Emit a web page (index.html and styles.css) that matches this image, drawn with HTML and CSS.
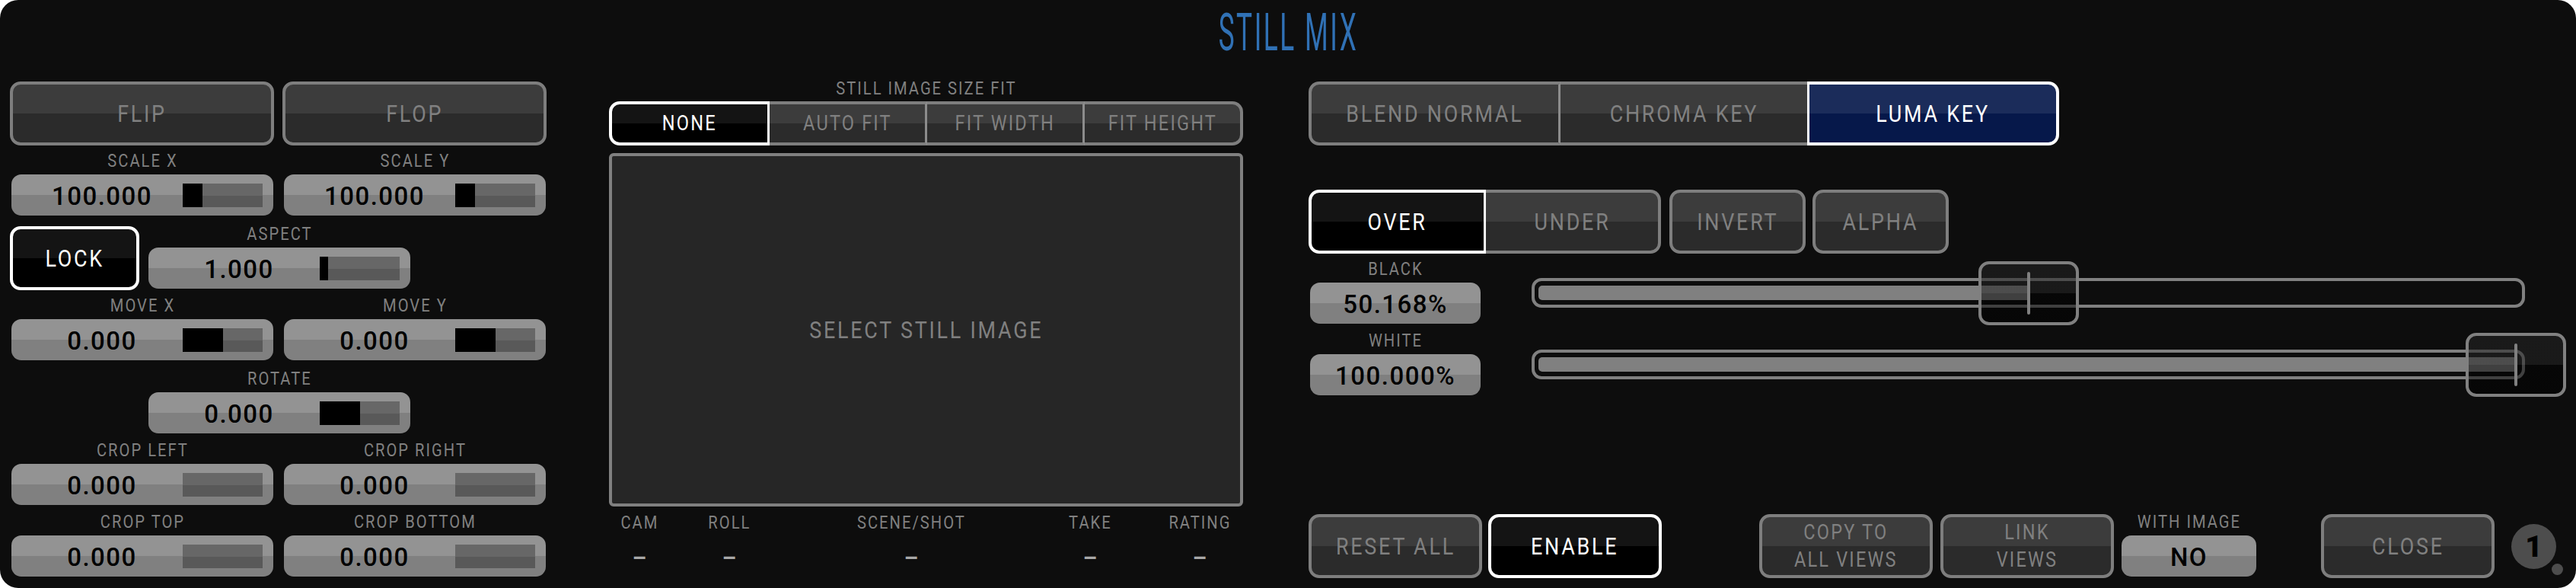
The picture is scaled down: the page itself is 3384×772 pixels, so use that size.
FILE: index.html
```html
<!DOCTYPE html>
<html lang="en">
<head>
    <meta charset="UTF-8">
    <title>Still Mix</title>
    <link rel="stylesheet" href="styles.css">
</head>
<body>
    <div class="panel">
        <header class="title"><h1>STILL MIX</h1></header>
        <div class="columns">
            <section class="transform">
                <div class="row buttons">
                    <button class="btn wide"><span>FLIP</span></button>
                    <button class="btn wide"><span>FLOP</span></button>
                </div>
                <div class="row short">
                    <div class="control"><label>SCALE X</label><div class="field"><b>100.000</b><i class="meter"><i style="width:25%"></i></i></div></div>
                    <div class="control"><label>SCALE Y</label><div class="field"><b>100.000</b><i class="meter"><i style="width:25%"></i></i></div></div>
                </div>
                <div class="row tall">
                    <button class="btn lock active"><span>LOCK</span></button>
                    <div class="control aspect"><label>ASPECT</label><div class="field"><b>1.000</b><i class="meter"><i style="width:10%"></i></i></div></div>
                </div>
                <div class="row">
                    <div class="control"><label>MOVE X</label><div class="field"><b>0.000</b><i class="meter"><i style="width:50%"></i></i></div></div>
                    <div class="control"><label>MOVE Y</label><div class="field"><b>0.000</b><i class="meter"><i style="width:50%"></i></i></div></div>
                </div>
                <div class="row tall">
                    <div class="control rotate"><label>ROTATE</label><div class="field"><b>0.000</b><i class="meter"><i style="width:50%"></i></i></div></div>
                </div>
                <div class="row">
                    <div class="control"><label>CROP LEFT</label><div class="field"><b>0.000</b><i class="meter"></i></div></div>
                    <div class="control"><label>CROP RIGHT</label><div class="field"><b>0.000</b><i class="meter"></i></div></div>
                </div>
                <div class="row">
                    <div class="control"><label>CROP TOP</label><div class="field"><b>0.000</b><i class="meter"></i></div></div>
                    <div class="control"><label>CROP BOTTOM</label><div class="field"><b>0.000</b><i class="meter"></i></div></div>
                </div>
            </section>

            <section class="still">
                <label>STILL IMAGE SIZE FIT</label>
                <div class="seg fit">
                    <button class="btn active"><span>NONE</span></button>
                    <button class="btn"><span>AUTO FIT</span></button>
                    <button class="btn"><span>FIT WIDTH</span></button>
                    <button class="btn"><span>FIT HEIGHT</span></button>
                </div>
                <div class="preview"><span>SELECT STILL IMAGE</span></div>
                <div class="meta">
                    <div><label>CAM</label><em>–</em></div>
                    <div><label>ROLL</label><em>–</em></div>
                    <div><label>SCENE/SHOT</label><em>–</em></div>
                    <div><label>TAKE</label><em>–</em></div>
                    <div><label>RATING</label><em>–</em></div>
                </div>
            </section>

            <section class="key">
                <div class="seg mode">
                    <button class="btn"><span>BLEND NORMAL</span></button>
                    <button class="btn before-active"><span>CHROMA KEY</span></button>
                    <button class="btn active blue"><span>LUMA KEY</span></button>
                </div>
                <div class="options">
                    <div class="seg order">
                        <button class="btn active"><span>OVER</span></button>
                        <button class="btn"><span>UNDER</span></button>
                    </div>
                    <button class="btn"><span>INVERT</span></button>
                    <button class="btn"><span>ALPHA</span></button>
                </div>
                <div class="level first">
                    <div class="control small"><label>BLACK</label><div class="field"><b>50.168%</b></div></div>
                    <div class="slider"><div class="rail">
                        <div class="fill" style="width:50.168%"></div>
                        <div class="knob" style="left:50.168%"></div>
                    </div></div>
                </div>
                <div class="level">
                    <div class="control small"><label>WHITE</label><div class="field"><b>100.000%</b></div></div>
                    <div class="slider"><div class="rail">
                        <div class="fill" style="width:100%"></div>
                        <div class="knob" style="left:100%"></div>
                    </div></div>
                </div>
                <footer class="actions">
                    <button class="btn"><span>RESET ALL</span></button>
                    <button class="btn enable active"><span>ENABLE</span></button>
                    <button class="btn copy two"><span>COPY TO<br>ALL VIEWS</span></button>
                    <button class="btn link two"><span>LINK<br>VIEWS</span></button>
                    <div class="control image"><label>WITH IMAGE</label><div class="field"><b>NO</b></div></div>
                    <button class="btn close"><span>CLOSE</span></button>
                    <div class="badge">1</div>
                </footer>
            </section>
        </div>
    </div>
</body>
</html>
```
FILE: styles.css
```css
* {
    box-sizing: border-box;
}
body {
    margin: 0;
    background: #fff;
    font-family: Roboto, "Liberation Sans", sans-serif;
}
.panel {
    width: 3384px;
    height: 772px;
    background: #0d0d0d;
    border-radius: 24px;
    overflow: hidden;
}
.title {
    height: 107px;
    text-align: center;
}
h1 {
    margin: 0;
    padding: 1px 0 0 2px;
    font-size: 69px;
    line-height: 84px;
    font-weight: 400;
    color: #3071b5;
    letter-spacing: 5px;
    transform: scaleX(.51);
}
.columns {
    display: flex;
    padding-left: 13px;
}
label {
    display: block;
    height: 36px;
    line-height: 36px;
    font-size: 24px;
    color: #808080;
    text-align: center;
    text-indent: 1px;
    white-space: nowrap;
    letter-spacing: 2.4px;
    transform: scaleX(.84);
}

/* buttons */
.btn {
    display: flex;
    align-items: center;
    justify-content: center;
    height: 84px;
    padding: 0;
    border: 4px solid #7e7e7e;
    border-radius: 14px;
    background: linear-gradient(#3c3c3c 50%, #2b2b2b 50%);
    background-origin: border-box;
    color: #808080;
    font: 32px/36px Roboto, "Liberation Sans", sans-serif;
    letter-spacing: 3.3px;
    white-space: nowrap;
}
.btn span,
.preview span {
    transform: scaleX(.84);
}
.btn.active {
    border-color: #fff;
    background-image: linear-gradient(#141414 50%, #000 50%);
    color: #fff;
}
.btn.blue {
    background-image: linear-gradient(#1b2c5a 50%, #06184a 50%);
}
.seg {
    display: flex;
}
.seg .btn {
    flex: 1;
    border-left-width: 0;
    border-right: 3px solid #8c8c8c;
    border-radius: 0;
}
.seg .btn:first-child {
    border-left-width: 4px;
    border-radius: 14px 0 0 14px;
}
.seg .btn:last-child {
    border-right: 4px solid #7e7e7e;
    border-radius: 0 14px 14px 0;
}
.seg .before-active {
    border-right-width: 0;
}
.seg .btn.active {
    border-color: #fff;
}
.seg .blue {
    border-left-width: 3px;
}

/* value fields */
.control {
    width: 347px;
    padding: 0 1px 0 2px;
}
.field {
    display: flex;
    align-items: center;
    height: 54px;
    padding-right: 14px;
    border-radius: 13px;
    background: linear-gradient(#939393 50%, #808080 50%);
}
.field b {
    flex: 1;
    padding: 3px 0 0 13px;
    color: #000;
    font-size: 33px;
    line-height: 36px;
    font-weight: 500;
    letter-spacing: 1.5px;
    text-align: center;
}
.meter {
    width: 105px;
    height: 31px;
    background: linear-gradient(#676767 16px, #595959 16px);
}
.meter i {
    display: block;
    height: 31px;
    background: #000;
}

/* left column */
.transform {
    width: 787px;
}
.row {
    display: flex;
    align-items: flex-end;
    gap: 11px;
    height: 94px;
}
.row.buttons {
    height: 84px;
}
.row.short {
    height: 92px;
}
.row.tall {
    height: 96px;
}
.wide {
    width: 347px;
}
.lock {
    width: 170px;
    margin-bottom: -2px;
}
.aspect {
    margin-left: -1px;
}
.rotate {
    margin-left: 180px;
}

/* middle column */
.still {
    width: 833px;
    margin-right: 86px;
}
.still > label {
    margin: -9px 0 -1px;
}
.fit .btn {
    height: 58px;
    font-size: 28px;
    letter-spacing: 2.6px;
}
.preview {
    display: flex;
    align-items: center;
    justify-content: center;
    height: 464px;
    margin-top: 10px;
    border: 4px solid #808080;
    border-radius: 6px;
    background: #262626;
    color: #808080;
    font-size: 32px;
    letter-spacing: 3.3px;
}
.meta {
    display: grid;
    grid-template-columns: 80px 156px 322px 148px 140px;
    margin-top: 3px;
    text-align: center;
}
.meta em {
    display: block;
    margin-top: 11px;
    color: #a8a8a8;
    font-size: 33px;
    font-style: normal;
    font-weight: 500;
    line-height: 36px;
    transform: scaleX(.9);
}

/* right column */
.key {
    width: 1652px;
}
.mode {
    width: 986px;
}
.options {
    display: flex;
    gap: 9px;
    margin-top: 58px;
}
.order {
    width: 463px;
    margin-right: 2px;
}
.options > .btn {
    width: 179px;
}
.level {
    display: flex;
    align-items: flex-end;
    height: 94px;
}
.level.first {
    height: 92px;
}
.small {
    width: 227px;
}
.small .field,
.image .field {
    padding-right: 0;
}
.small b,
.image b {
    padding-left: 0;
}
.slider {
    width: 1305px;
    height: 39px;
    margin: 0 0 21px 66px;
    padding: 6px 8px 6px 5px;
    border: 4px solid #808080;
    border-radius: 13px;
}
.rail {
    position: relative;
    height: 19px;
}
.fill {
    height: 19px;
    border-radius: 5px 0 0 5px;
    background: #808080;
}
.knob {
    position: absolute;
    top: -32px;
    width: 132px;
    height: 84px;
    margin-left: -66px;
    border: 4px solid #808080;
    border-radius: 14px;
    background: linear-gradient(rgba(36,36,36,.557) 50%, rgba(0,0,0,.5) 50%);
    background-clip: padding-box;
}
.knob::after {
    content: "";
    position: absolute;
    left: 60px;
    top: 10px;
    width: 4px;
    height: 56px;
    border-radius: 2px;
    background: #808080;
}
.actions {
    display: flex;
    align-items: flex-end;
    margin-top: 148px;
}
.actions .btn {
    width: 228px;
}
.actions .enable {
    margin-left: 8px;
}
.actions .copy {
    margin-left: 128px;
}
.actions .link {
    margin-left: 10px;
}
.actions .two {
    font-size: 28px;
    letter-spacing: 2.6px;
}
.image {
    width: 180px;
    margin: 0 0 2px 8px;
}
.actions .close {
    margin-left: 84px;
}
.badge {
    position: relative;
    width: 59px;
    height: 59px;
    margin: 0 0 12px 22px;
    border-radius: 50%;
    background: #4d4d4d;
    color: #000;
    font-size: 39px;
    font-weight: 900;
    line-height: 60px;
    text-align: center;
}
.badge::after {
    content: "";
    position: absolute;
    left: 53px;
    top: 52px;
    width: 15px;
    height: 15px;
    border-radius: 50%;
    background: #4d4d4d;
}
```
